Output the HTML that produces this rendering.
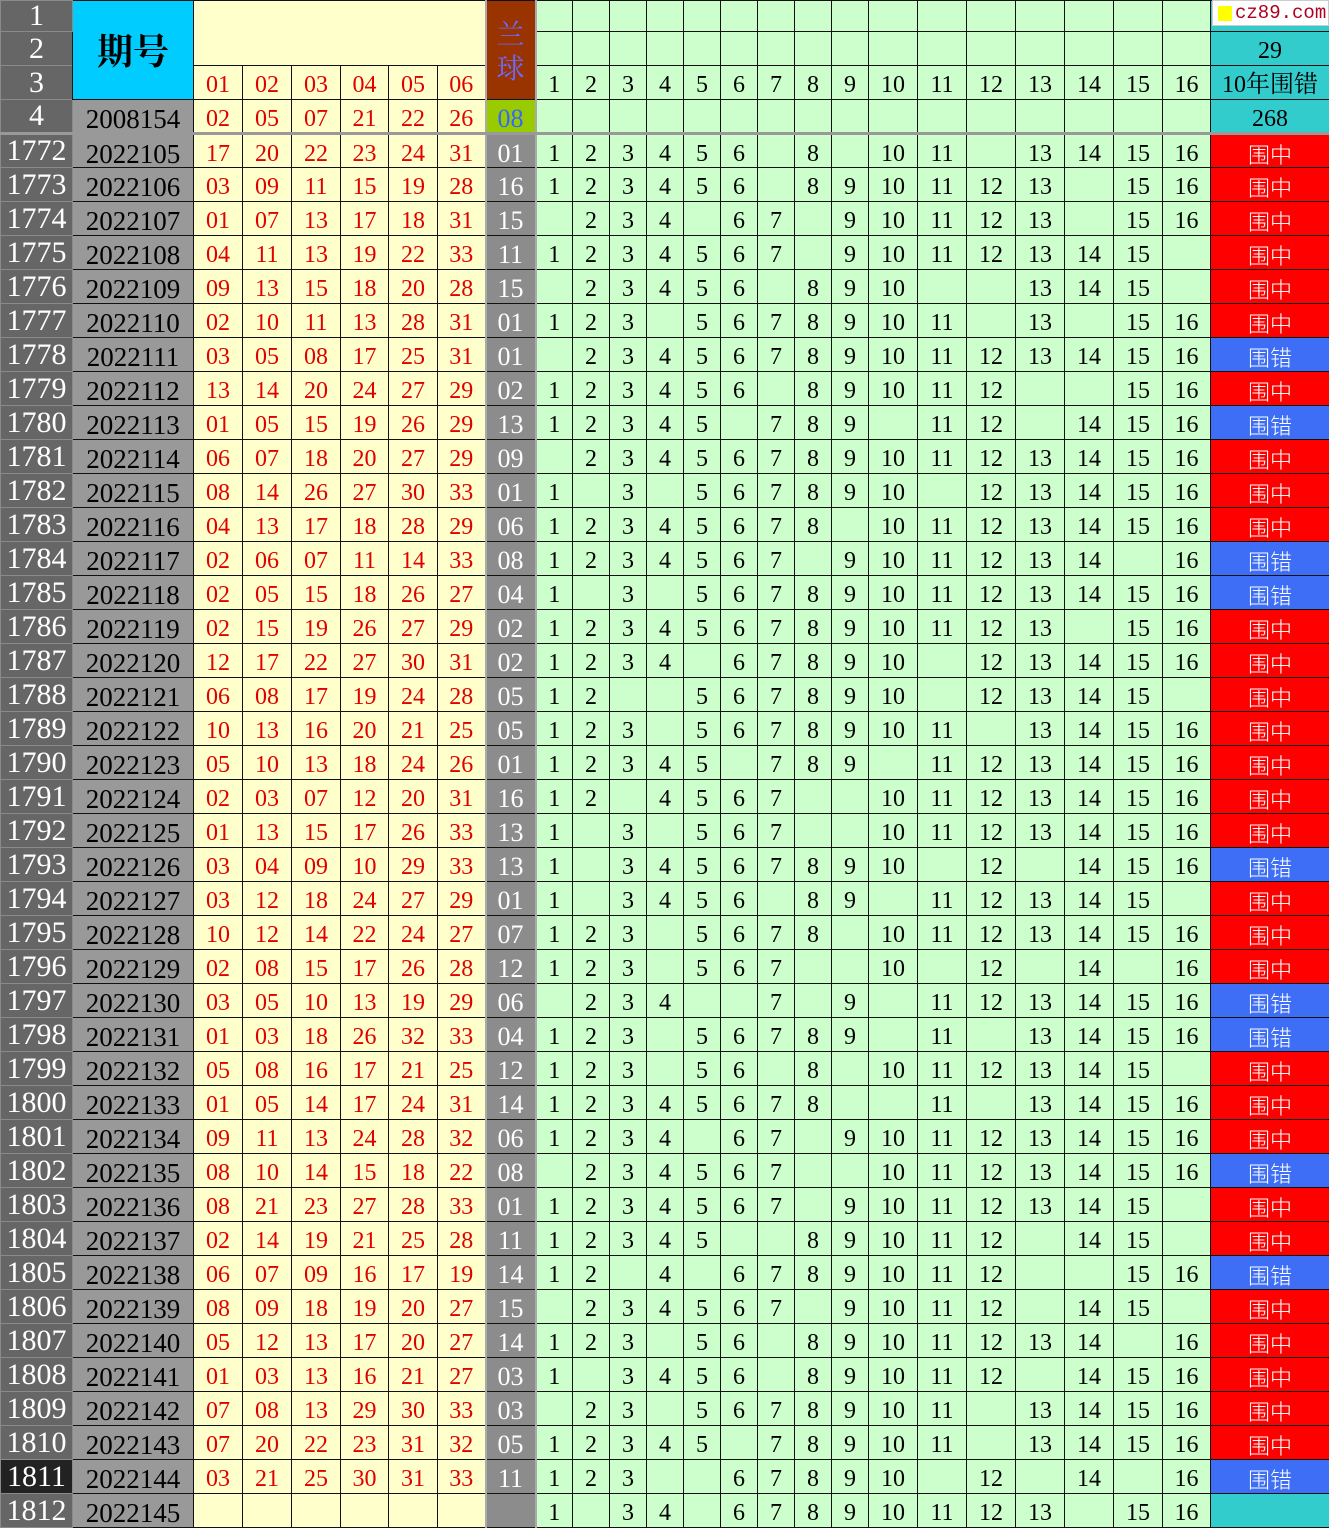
<!DOCTYPE html>
<html><head><meta charset="utf-8"><style>
*{margin:0;padding:0;box-sizing:border-box}
body{width:1329px;height:1527px;overflow:hidden;background:#fff;position:relative}
table{border-collapse:collapse;table-layout:fixed;width:1329px;font-family:"Liberation Serif","Noto Serif CJK SC",serif}
td{border:1px solid #111;height:34px;text-align:center;vertical-align:middle;padding-top:5px;font-size:24px;line-height:26px;overflow:hidden;white-space:nowrap;color:#000}
tr.h1 td{height:31px}
td.r{background:#666;color:#fff;font-size:30px;border-color:#8a8a8a;padding-top:0;line-height:30px}
td.rk{background:#222}
td.p{background:#999;font-size:27px}
td.y{background:#ffffcc;color:#e00000}
td.b{background:#8c8c8c;color:#fff;font-size:26px;border-left:2px solid #aaa;border-right:2px solid #aaa}
td.g{background:#ccffcc}
td.z{background:#ff0000;color:#fff;font-family:"Noto Sans CJK SC",sans-serif;font-size:22px;font-weight:300}
td.c{background:#3d6ef5;color:#fff;font-family:"Noto Sans CJK SC",sans-serif;font-size:22px;font-weight:300}
td.k{background:#33cccc;font-size:24px}
td.q{background:#00ccff;font-family:"Noto Serif CJK SC",serif;font-size:36px;font-weight:bold;padding-top:0}
td.lan{background:#993300;color:#6a6aff;font-family:"Noto Serif CJK SC",serif;font-size:28px;line-height:34px;padding-top:0;border-left:2px solid #aaa;border-right:2px solid #aaa}
td.lb{background:#99cc00;color:#3366ff;font-size:26px;border-left:2px solid #aaa;border-right:2px solid #aaa}
tr.h4 td{border-bottom:3px solid #999}
#wm{position:absolute;left:1212px;top:0;width:117px;height:26px;background:#fff;border:1px solid #ccc;font-family:"Liberation Mono",monospace;font-size:19px;color:#b00020;line-height:24px;padding-left:22px;white-space:nowrap}
#wm i{position:absolute;left:5px;top:5px;width:14px;height:15px;background:#ffff00}
</style></head><body>
<table>
<colgroup><col style="width:72px"><col style="width:121px"><col style="width:49px"><col style="width:49px"><col style="width:49px"><col style="width:48px"><col style="width:49px"><col style="width:48px"><col style="width:50px"><col style="width:37px"><col style="width:37px"><col style="width:37px"><col style="width:37px"><col style="width:37px"><col style="width:37px"><col style="width:37px"><col style="width:37px"><col style="width:37px"><col style="width:49px"><col style="width:49px"><col style="width:49px"><col style="width:49px"><col style="width:49px"><col style="width:49px"><col style="width:48px"><col style="width:119px"></colgroup>
<tr class="h1"><td class="r">1</td><td class="q" rowspan="3">期号</td><td class="y" colspan="6" rowspan="2"></td><td class="lan" rowspan="3">兰<br>球</td><td class="g"></td><td class="g"></td><td class="g"></td><td class="g"></td><td class="g"></td><td class="g"></td><td class="g"></td><td class="g"></td><td class="g"></td><td class="g"></td><td class="g"></td><td class="g"></td><td class="g"></td><td class="g"></td><td class="g"></td><td class="g"></td><td class="k"></td></tr>
<tr><td class="r">2</td><td class="g"></td><td class="g"></td><td class="g"></td><td class="g"></td><td class="g"></td><td class="g"></td><td class="g"></td><td class="g"></td><td class="g"></td><td class="g"></td><td class="g"></td><td class="g"></td><td class="g"></td><td class="g"></td><td class="g"></td><td class="g"></td><td class="k">29</td></tr>
<tr><td class="r">3</td><td class="y">01</td><td class="y">02</td><td class="y">03</td><td class="y">04</td><td class="y">05</td><td class="y">06</td><td class="g">1</td><td class="g">2</td><td class="g">3</td><td class="g">4</td><td class="g">5</td><td class="g">6</td><td class="g">7</td><td class="g">8</td><td class="g">9</td><td class="g">10</td><td class="g">11</td><td class="g">12</td><td class="g">13</td><td class="g">14</td><td class="g">15</td><td class="g">16</td><td class="k" style="font-family:'Liberation Serif','Noto Serif CJK SC',serif">10年围错</td></tr>
<tr class="h4"><td class="r">4</td><td class="p">2008154</td><td class="y">02</td><td class="y">05</td><td class="y">07</td><td class="y">21</td><td class="y">22</td><td class="y">26</td><td class="lb">08</td><td class="g"></td><td class="g"></td><td class="g"></td><td class="g"></td><td class="g"></td><td class="g"></td><td class="g"></td><td class="g"></td><td class="g"></td><td class="g"></td><td class="g"></td><td class="g"></td><td class="g"></td><td class="g"></td><td class="g"></td><td class="g"></td><td class="k">268</td></tr>
<tr><td class="r">1772</td><td class="p">2022105</td><td class="y">17</td><td class="y">20</td><td class="y">22</td><td class="y">23</td><td class="y">24</td><td class="y">31</td><td class="b">01</td><td class="g">1</td><td class="g">2</td><td class="g">3</td><td class="g">4</td><td class="g">5</td><td class="g">6</td><td class="g"></td><td class="g">8</td><td class="g"></td><td class="g">10</td><td class="g">11</td><td class="g"></td><td class="g">13</td><td class="g">14</td><td class="g">15</td><td class="g">16</td><td class="z">围中</td></tr>
<tr><td class="r">1773</td><td class="p">2022106</td><td class="y">03</td><td class="y">09</td><td class="y">11</td><td class="y">15</td><td class="y">19</td><td class="y">28</td><td class="b">16</td><td class="g">1</td><td class="g">2</td><td class="g">3</td><td class="g">4</td><td class="g">5</td><td class="g">6</td><td class="g"></td><td class="g">8</td><td class="g">9</td><td class="g">10</td><td class="g">11</td><td class="g">12</td><td class="g">13</td><td class="g"></td><td class="g">15</td><td class="g">16</td><td class="z">围中</td></tr>
<tr><td class="r">1774</td><td class="p">2022107</td><td class="y">01</td><td class="y">07</td><td class="y">13</td><td class="y">17</td><td class="y">18</td><td class="y">31</td><td class="b">15</td><td class="g"></td><td class="g">2</td><td class="g">3</td><td class="g">4</td><td class="g"></td><td class="g">6</td><td class="g">7</td><td class="g"></td><td class="g">9</td><td class="g">10</td><td class="g">11</td><td class="g">12</td><td class="g">13</td><td class="g"></td><td class="g">15</td><td class="g">16</td><td class="z">围中</td></tr>
<tr><td class="r">1775</td><td class="p">2022108</td><td class="y">04</td><td class="y">11</td><td class="y">13</td><td class="y">19</td><td class="y">22</td><td class="y">33</td><td class="b">11</td><td class="g">1</td><td class="g">2</td><td class="g">3</td><td class="g">4</td><td class="g">5</td><td class="g">6</td><td class="g">7</td><td class="g"></td><td class="g">9</td><td class="g">10</td><td class="g">11</td><td class="g">12</td><td class="g">13</td><td class="g">14</td><td class="g">15</td><td class="g"></td><td class="z">围中</td></tr>
<tr><td class="r">1776</td><td class="p">2022109</td><td class="y">09</td><td class="y">13</td><td class="y">15</td><td class="y">18</td><td class="y">20</td><td class="y">28</td><td class="b">15</td><td class="g"></td><td class="g">2</td><td class="g">3</td><td class="g">4</td><td class="g">5</td><td class="g">6</td><td class="g"></td><td class="g">8</td><td class="g">9</td><td class="g">10</td><td class="g"></td><td class="g"></td><td class="g">13</td><td class="g">14</td><td class="g">15</td><td class="g"></td><td class="z">围中</td></tr>
<tr><td class="r">1777</td><td class="p">2022110</td><td class="y">02</td><td class="y">10</td><td class="y">11</td><td class="y">13</td><td class="y">28</td><td class="y">31</td><td class="b">01</td><td class="g">1</td><td class="g">2</td><td class="g">3</td><td class="g"></td><td class="g">5</td><td class="g">6</td><td class="g">7</td><td class="g">8</td><td class="g">9</td><td class="g">10</td><td class="g">11</td><td class="g"></td><td class="g">13</td><td class="g"></td><td class="g">15</td><td class="g">16</td><td class="z">围中</td></tr>
<tr><td class="r">1778</td><td class="p">2022111</td><td class="y">03</td><td class="y">05</td><td class="y">08</td><td class="y">17</td><td class="y">25</td><td class="y">31</td><td class="b">01</td><td class="g"></td><td class="g">2</td><td class="g">3</td><td class="g">4</td><td class="g">5</td><td class="g">6</td><td class="g">7</td><td class="g">8</td><td class="g">9</td><td class="g">10</td><td class="g">11</td><td class="g">12</td><td class="g">13</td><td class="g">14</td><td class="g">15</td><td class="g">16</td><td class="c">围错</td></tr>
<tr><td class="r">1779</td><td class="p">2022112</td><td class="y">13</td><td class="y">14</td><td class="y">20</td><td class="y">24</td><td class="y">27</td><td class="y">29</td><td class="b">02</td><td class="g">1</td><td class="g">2</td><td class="g">3</td><td class="g">4</td><td class="g">5</td><td class="g">6</td><td class="g"></td><td class="g">8</td><td class="g">9</td><td class="g">10</td><td class="g">11</td><td class="g">12</td><td class="g"></td><td class="g"></td><td class="g">15</td><td class="g">16</td><td class="z">围中</td></tr>
<tr><td class="r">1780</td><td class="p">2022113</td><td class="y">01</td><td class="y">05</td><td class="y">15</td><td class="y">19</td><td class="y">26</td><td class="y">29</td><td class="b">13</td><td class="g">1</td><td class="g">2</td><td class="g">3</td><td class="g">4</td><td class="g">5</td><td class="g"></td><td class="g">7</td><td class="g">8</td><td class="g">9</td><td class="g"></td><td class="g">11</td><td class="g">12</td><td class="g"></td><td class="g">14</td><td class="g">15</td><td class="g">16</td><td class="c">围错</td></tr>
<tr><td class="r">1781</td><td class="p">2022114</td><td class="y">06</td><td class="y">07</td><td class="y">18</td><td class="y">20</td><td class="y">27</td><td class="y">29</td><td class="b">09</td><td class="g"></td><td class="g">2</td><td class="g">3</td><td class="g">4</td><td class="g">5</td><td class="g">6</td><td class="g">7</td><td class="g">8</td><td class="g">9</td><td class="g">10</td><td class="g">11</td><td class="g">12</td><td class="g">13</td><td class="g">14</td><td class="g">15</td><td class="g">16</td><td class="z">围中</td></tr>
<tr><td class="r">1782</td><td class="p">2022115</td><td class="y">08</td><td class="y">14</td><td class="y">26</td><td class="y">27</td><td class="y">30</td><td class="y">33</td><td class="b">01</td><td class="g">1</td><td class="g"></td><td class="g">3</td><td class="g"></td><td class="g">5</td><td class="g">6</td><td class="g">7</td><td class="g">8</td><td class="g">9</td><td class="g">10</td><td class="g"></td><td class="g">12</td><td class="g">13</td><td class="g">14</td><td class="g">15</td><td class="g">16</td><td class="z">围中</td></tr>
<tr><td class="r">1783</td><td class="p">2022116</td><td class="y">04</td><td class="y">13</td><td class="y">17</td><td class="y">18</td><td class="y">28</td><td class="y">29</td><td class="b">06</td><td class="g">1</td><td class="g">2</td><td class="g">3</td><td class="g">4</td><td class="g">5</td><td class="g">6</td><td class="g">7</td><td class="g">8</td><td class="g"></td><td class="g">10</td><td class="g">11</td><td class="g">12</td><td class="g">13</td><td class="g">14</td><td class="g">15</td><td class="g">16</td><td class="z">围中</td></tr>
<tr><td class="r">1784</td><td class="p">2022117</td><td class="y">02</td><td class="y">06</td><td class="y">07</td><td class="y">11</td><td class="y">14</td><td class="y">33</td><td class="b">08</td><td class="g">1</td><td class="g">2</td><td class="g">3</td><td class="g">4</td><td class="g">5</td><td class="g">6</td><td class="g">7</td><td class="g"></td><td class="g">9</td><td class="g">10</td><td class="g">11</td><td class="g">12</td><td class="g">13</td><td class="g">14</td><td class="g"></td><td class="g">16</td><td class="c">围错</td></tr>
<tr><td class="r">1785</td><td class="p">2022118</td><td class="y">02</td><td class="y">05</td><td class="y">15</td><td class="y">18</td><td class="y">26</td><td class="y">27</td><td class="b">04</td><td class="g">1</td><td class="g"></td><td class="g">3</td><td class="g"></td><td class="g">5</td><td class="g">6</td><td class="g">7</td><td class="g">8</td><td class="g">9</td><td class="g">10</td><td class="g">11</td><td class="g">12</td><td class="g">13</td><td class="g">14</td><td class="g">15</td><td class="g">16</td><td class="c">围错</td></tr>
<tr><td class="r">1786</td><td class="p">2022119</td><td class="y">02</td><td class="y">15</td><td class="y">19</td><td class="y">26</td><td class="y">27</td><td class="y">29</td><td class="b">02</td><td class="g">1</td><td class="g">2</td><td class="g">3</td><td class="g">4</td><td class="g">5</td><td class="g">6</td><td class="g">7</td><td class="g">8</td><td class="g">9</td><td class="g">10</td><td class="g">11</td><td class="g">12</td><td class="g">13</td><td class="g"></td><td class="g">15</td><td class="g">16</td><td class="z">围中</td></tr>
<tr><td class="r">1787</td><td class="p">2022120</td><td class="y">12</td><td class="y">17</td><td class="y">22</td><td class="y">27</td><td class="y">30</td><td class="y">31</td><td class="b">02</td><td class="g">1</td><td class="g">2</td><td class="g">3</td><td class="g">4</td><td class="g"></td><td class="g">6</td><td class="g">7</td><td class="g">8</td><td class="g">9</td><td class="g">10</td><td class="g"></td><td class="g">12</td><td class="g">13</td><td class="g">14</td><td class="g">15</td><td class="g">16</td><td class="z">围中</td></tr>
<tr><td class="r">1788</td><td class="p">2022121</td><td class="y">06</td><td class="y">08</td><td class="y">17</td><td class="y">19</td><td class="y">24</td><td class="y">28</td><td class="b">05</td><td class="g">1</td><td class="g">2</td><td class="g"></td><td class="g"></td><td class="g">5</td><td class="g">6</td><td class="g">7</td><td class="g">8</td><td class="g">9</td><td class="g">10</td><td class="g"></td><td class="g">12</td><td class="g">13</td><td class="g">14</td><td class="g">15</td><td class="g"></td><td class="z">围中</td></tr>
<tr><td class="r">1789</td><td class="p">2022122</td><td class="y">10</td><td class="y">13</td><td class="y">16</td><td class="y">20</td><td class="y">21</td><td class="y">25</td><td class="b">05</td><td class="g">1</td><td class="g">2</td><td class="g">3</td><td class="g"></td><td class="g">5</td><td class="g">6</td><td class="g">7</td><td class="g">8</td><td class="g">9</td><td class="g">10</td><td class="g">11</td><td class="g"></td><td class="g">13</td><td class="g">14</td><td class="g">15</td><td class="g">16</td><td class="z">围中</td></tr>
<tr><td class="r">1790</td><td class="p">2022123</td><td class="y">05</td><td class="y">10</td><td class="y">13</td><td class="y">18</td><td class="y">24</td><td class="y">26</td><td class="b">01</td><td class="g">1</td><td class="g">2</td><td class="g">3</td><td class="g">4</td><td class="g">5</td><td class="g"></td><td class="g">7</td><td class="g">8</td><td class="g">9</td><td class="g"></td><td class="g">11</td><td class="g">12</td><td class="g">13</td><td class="g">14</td><td class="g">15</td><td class="g">16</td><td class="z">围中</td></tr>
<tr><td class="r">1791</td><td class="p">2022124</td><td class="y">02</td><td class="y">03</td><td class="y">07</td><td class="y">12</td><td class="y">20</td><td class="y">31</td><td class="b">16</td><td class="g">1</td><td class="g">2</td><td class="g"></td><td class="g">4</td><td class="g">5</td><td class="g">6</td><td class="g">7</td><td class="g"></td><td class="g"></td><td class="g">10</td><td class="g">11</td><td class="g">12</td><td class="g">13</td><td class="g">14</td><td class="g">15</td><td class="g">16</td><td class="z">围中</td></tr>
<tr><td class="r">1792</td><td class="p">2022125</td><td class="y">01</td><td class="y">13</td><td class="y">15</td><td class="y">17</td><td class="y">26</td><td class="y">33</td><td class="b">13</td><td class="g">1</td><td class="g"></td><td class="g">3</td><td class="g"></td><td class="g">5</td><td class="g">6</td><td class="g">7</td><td class="g"></td><td class="g"></td><td class="g">10</td><td class="g">11</td><td class="g">12</td><td class="g">13</td><td class="g">14</td><td class="g">15</td><td class="g">16</td><td class="z">围中</td></tr>
<tr><td class="r">1793</td><td class="p">2022126</td><td class="y">03</td><td class="y">04</td><td class="y">09</td><td class="y">10</td><td class="y">29</td><td class="y">33</td><td class="b">13</td><td class="g">1</td><td class="g"></td><td class="g">3</td><td class="g">4</td><td class="g">5</td><td class="g">6</td><td class="g">7</td><td class="g">8</td><td class="g">9</td><td class="g">10</td><td class="g"></td><td class="g">12</td><td class="g"></td><td class="g">14</td><td class="g">15</td><td class="g">16</td><td class="c">围错</td></tr>
<tr><td class="r">1794</td><td class="p">2022127</td><td class="y">03</td><td class="y">12</td><td class="y">18</td><td class="y">24</td><td class="y">27</td><td class="y">29</td><td class="b">01</td><td class="g">1</td><td class="g"></td><td class="g">3</td><td class="g">4</td><td class="g">5</td><td class="g">6</td><td class="g"></td><td class="g">8</td><td class="g">9</td><td class="g"></td><td class="g">11</td><td class="g">12</td><td class="g">13</td><td class="g">14</td><td class="g">15</td><td class="g"></td><td class="z">围中</td></tr>
<tr><td class="r">1795</td><td class="p">2022128</td><td class="y">10</td><td class="y">12</td><td class="y">14</td><td class="y">22</td><td class="y">24</td><td class="y">27</td><td class="b">07</td><td class="g">1</td><td class="g">2</td><td class="g">3</td><td class="g"></td><td class="g">5</td><td class="g">6</td><td class="g">7</td><td class="g">8</td><td class="g"></td><td class="g">10</td><td class="g">11</td><td class="g">12</td><td class="g">13</td><td class="g">14</td><td class="g">15</td><td class="g">16</td><td class="z">围中</td></tr>
<tr><td class="r">1796</td><td class="p">2022129</td><td class="y">02</td><td class="y">08</td><td class="y">15</td><td class="y">17</td><td class="y">26</td><td class="y">28</td><td class="b">12</td><td class="g">1</td><td class="g">2</td><td class="g">3</td><td class="g"></td><td class="g">5</td><td class="g">6</td><td class="g">7</td><td class="g"></td><td class="g"></td><td class="g">10</td><td class="g"></td><td class="g">12</td><td class="g"></td><td class="g">14</td><td class="g"></td><td class="g">16</td><td class="z">围中</td></tr>
<tr><td class="r">1797</td><td class="p">2022130</td><td class="y">03</td><td class="y">05</td><td class="y">10</td><td class="y">13</td><td class="y">19</td><td class="y">29</td><td class="b">06</td><td class="g"></td><td class="g">2</td><td class="g">3</td><td class="g">4</td><td class="g"></td><td class="g"></td><td class="g">7</td><td class="g"></td><td class="g">9</td><td class="g"></td><td class="g">11</td><td class="g">12</td><td class="g">13</td><td class="g">14</td><td class="g">15</td><td class="g">16</td><td class="c">围错</td></tr>
<tr><td class="r">1798</td><td class="p">2022131</td><td class="y">01</td><td class="y">03</td><td class="y">18</td><td class="y">26</td><td class="y">32</td><td class="y">33</td><td class="b">04</td><td class="g">1</td><td class="g">2</td><td class="g">3</td><td class="g"></td><td class="g">5</td><td class="g">6</td><td class="g">7</td><td class="g">8</td><td class="g">9</td><td class="g"></td><td class="g">11</td><td class="g"></td><td class="g">13</td><td class="g">14</td><td class="g">15</td><td class="g">16</td><td class="c">围错</td></tr>
<tr><td class="r">1799</td><td class="p">2022132</td><td class="y">05</td><td class="y">08</td><td class="y">16</td><td class="y">17</td><td class="y">21</td><td class="y">25</td><td class="b">12</td><td class="g">1</td><td class="g">2</td><td class="g">3</td><td class="g"></td><td class="g">5</td><td class="g">6</td><td class="g"></td><td class="g">8</td><td class="g"></td><td class="g">10</td><td class="g">11</td><td class="g">12</td><td class="g">13</td><td class="g">14</td><td class="g">15</td><td class="g"></td><td class="z">围中</td></tr>
<tr><td class="r">1800</td><td class="p">2022133</td><td class="y">01</td><td class="y">05</td><td class="y">14</td><td class="y">17</td><td class="y">24</td><td class="y">31</td><td class="b">14</td><td class="g">1</td><td class="g">2</td><td class="g">3</td><td class="g">4</td><td class="g">5</td><td class="g">6</td><td class="g">7</td><td class="g">8</td><td class="g"></td><td class="g"></td><td class="g">11</td><td class="g"></td><td class="g">13</td><td class="g">14</td><td class="g">15</td><td class="g">16</td><td class="z">围中</td></tr>
<tr><td class="r">1801</td><td class="p">2022134</td><td class="y">09</td><td class="y">11</td><td class="y">13</td><td class="y">24</td><td class="y">28</td><td class="y">32</td><td class="b">06</td><td class="g">1</td><td class="g">2</td><td class="g">3</td><td class="g">4</td><td class="g"></td><td class="g">6</td><td class="g">7</td><td class="g"></td><td class="g">9</td><td class="g">10</td><td class="g">11</td><td class="g">12</td><td class="g">13</td><td class="g">14</td><td class="g">15</td><td class="g">16</td><td class="z">围中</td></tr>
<tr><td class="r">1802</td><td class="p">2022135</td><td class="y">08</td><td class="y">10</td><td class="y">14</td><td class="y">15</td><td class="y">18</td><td class="y">22</td><td class="b">08</td><td class="g"></td><td class="g">2</td><td class="g">3</td><td class="g">4</td><td class="g">5</td><td class="g">6</td><td class="g">7</td><td class="g"></td><td class="g"></td><td class="g">10</td><td class="g">11</td><td class="g">12</td><td class="g">13</td><td class="g">14</td><td class="g">15</td><td class="g">16</td><td class="c">围错</td></tr>
<tr><td class="r">1803</td><td class="p">2022136</td><td class="y">08</td><td class="y">21</td><td class="y">23</td><td class="y">27</td><td class="y">28</td><td class="y">33</td><td class="b">01</td><td class="g">1</td><td class="g">2</td><td class="g">3</td><td class="g">4</td><td class="g">5</td><td class="g">6</td><td class="g">7</td><td class="g"></td><td class="g">9</td><td class="g">10</td><td class="g">11</td><td class="g">12</td><td class="g">13</td><td class="g">14</td><td class="g">15</td><td class="g"></td><td class="z">围中</td></tr>
<tr><td class="r">1804</td><td class="p">2022137</td><td class="y">02</td><td class="y">14</td><td class="y">19</td><td class="y">21</td><td class="y">25</td><td class="y">28</td><td class="b">11</td><td class="g">1</td><td class="g">2</td><td class="g">3</td><td class="g">4</td><td class="g">5</td><td class="g"></td><td class="g"></td><td class="g">8</td><td class="g">9</td><td class="g">10</td><td class="g">11</td><td class="g">12</td><td class="g"></td><td class="g">14</td><td class="g">15</td><td class="g"></td><td class="z">围中</td></tr>
<tr><td class="r">1805</td><td class="p">2022138</td><td class="y">06</td><td class="y">07</td><td class="y">09</td><td class="y">16</td><td class="y">17</td><td class="y">19</td><td class="b">14</td><td class="g">1</td><td class="g">2</td><td class="g"></td><td class="g">4</td><td class="g"></td><td class="g">6</td><td class="g">7</td><td class="g">8</td><td class="g">9</td><td class="g">10</td><td class="g">11</td><td class="g">12</td><td class="g"></td><td class="g"></td><td class="g">15</td><td class="g">16</td><td class="c">围错</td></tr>
<tr><td class="r">1806</td><td class="p">2022139</td><td class="y">08</td><td class="y">09</td><td class="y">18</td><td class="y">19</td><td class="y">20</td><td class="y">27</td><td class="b">15</td><td class="g"></td><td class="g">2</td><td class="g">3</td><td class="g">4</td><td class="g">5</td><td class="g">6</td><td class="g">7</td><td class="g"></td><td class="g">9</td><td class="g">10</td><td class="g">11</td><td class="g">12</td><td class="g"></td><td class="g">14</td><td class="g">15</td><td class="g"></td><td class="z">围中</td></tr>
<tr><td class="r">1807</td><td class="p">2022140</td><td class="y">05</td><td class="y">12</td><td class="y">13</td><td class="y">17</td><td class="y">20</td><td class="y">27</td><td class="b">14</td><td class="g">1</td><td class="g">2</td><td class="g">3</td><td class="g"></td><td class="g">5</td><td class="g">6</td><td class="g"></td><td class="g">8</td><td class="g">9</td><td class="g">10</td><td class="g">11</td><td class="g">12</td><td class="g">13</td><td class="g">14</td><td class="g"></td><td class="g">16</td><td class="z">围中</td></tr>
<tr><td class="r">1808</td><td class="p">2022141</td><td class="y">01</td><td class="y">03</td><td class="y">13</td><td class="y">16</td><td class="y">21</td><td class="y">27</td><td class="b">03</td><td class="g">1</td><td class="g"></td><td class="g">3</td><td class="g">4</td><td class="g">5</td><td class="g">6</td><td class="g"></td><td class="g">8</td><td class="g">9</td><td class="g">10</td><td class="g">11</td><td class="g">12</td><td class="g"></td><td class="g">14</td><td class="g">15</td><td class="g">16</td><td class="z">围中</td></tr>
<tr><td class="r">1809</td><td class="p">2022142</td><td class="y">07</td><td class="y">08</td><td class="y">13</td><td class="y">29</td><td class="y">30</td><td class="y">33</td><td class="b">03</td><td class="g"></td><td class="g">2</td><td class="g">3</td><td class="g"></td><td class="g">5</td><td class="g">6</td><td class="g">7</td><td class="g">8</td><td class="g">9</td><td class="g">10</td><td class="g">11</td><td class="g"></td><td class="g">13</td><td class="g">14</td><td class="g">15</td><td class="g">16</td><td class="z">围中</td></tr>
<tr><td class="r">1810</td><td class="p">2022143</td><td class="y">07</td><td class="y">20</td><td class="y">22</td><td class="y">23</td><td class="y">31</td><td class="y">32</td><td class="b">05</td><td class="g">1</td><td class="g">2</td><td class="g">3</td><td class="g">4</td><td class="g">5</td><td class="g"></td><td class="g">7</td><td class="g">8</td><td class="g">9</td><td class="g">10</td><td class="g">11</td><td class="g"></td><td class="g">13</td><td class="g">14</td><td class="g">15</td><td class="g">16</td><td class="z">围中</td></tr>
<tr><td class="r rk">1811</td><td class="p">2022144</td><td class="y">03</td><td class="y">21</td><td class="y">25</td><td class="y">30</td><td class="y">31</td><td class="y">33</td><td class="b">11</td><td class="g">1</td><td class="g">2</td><td class="g">3</td><td class="g"></td><td class="g"></td><td class="g">6</td><td class="g">7</td><td class="g">8</td><td class="g">9</td><td class="g">10</td><td class="g"></td><td class="g">12</td><td class="g"></td><td class="g">14</td><td class="g"></td><td class="g">16</td><td class="c">围错</td></tr>
<tr><td class="r">1812</td><td class="p">2022145</td><td class="y"></td><td class="y"></td><td class="y"></td><td class="y"></td><td class="y"></td><td class="y"></td><td class="b"></td><td class="g">1</td><td class="g"></td><td class="g">3</td><td class="g">4</td><td class="g"></td><td class="g">6</td><td class="g">7</td><td class="g">8</td><td class="g">9</td><td class="g">10</td><td class="g">11</td><td class="g">12</td><td class="g">13</td><td class="g"></td><td class="g">15</td><td class="g">16</td><td class="k"></td></tr>
</table>
<div id="wm"><i></i>cz89.com</div>
</body></html>
